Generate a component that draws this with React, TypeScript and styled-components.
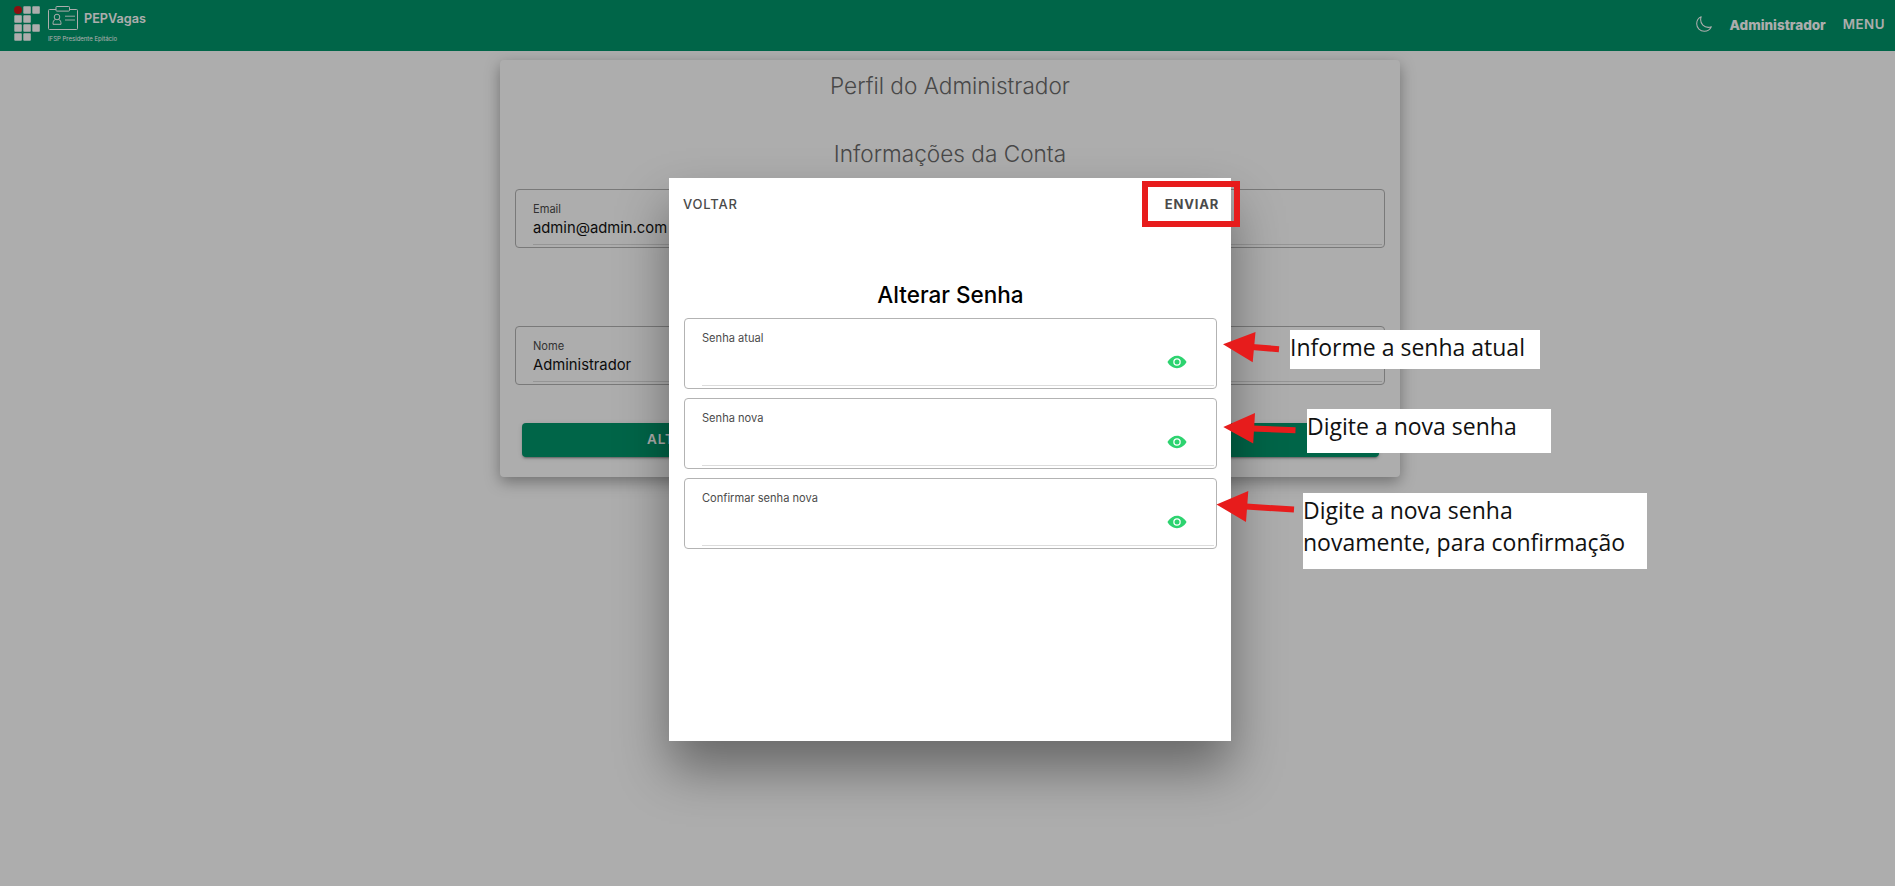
import React from "react";
import styled, { createGlobalStyle } from "styled-components";

const Global = createGlobalStyle`
  *, *::before, *::after { box-sizing: border-box; }
  body { margin: 0; background: #fff; overflow: hidden; font-family: Inter, "Liberation Sans", sans-serif; }
  button { font: inherit; border: 0; background: none; padding: 0; margin: 0; }
  h1, h2 { margin: 0; }
`;

const Page = styled.div`
  position: relative;
  width: 1895px;
  height: 886px;
  overflow: hidden;
`;

const Header = styled.header`
  height: 51px;
  padding: 0 10px 0 14px;
  display: flex;
  justify-content: space-between;
  background: #00966b;
  color: #fff;
`;

const Brand = styled.div`
  display: flex;
  gap: 8px;
  padding-top: 6px;
`;

const BrandText = styled.div`
  display: flex;
  flex-direction: column;
`;

const BrandRow = styled.div`
  display: flex;
  gap: 6px;
  height: 25px;
`;

const BrandName = styled.span`
  font-size: 12.700px;
  line-height: 25px;
  font-weight: 600;
`;

const BrandCampus = styled.span`
  font-size: 6px;
  line-height: 15px;
`;

const HeaderActions = styled.div`
  display: flex;
  align-items: center;
  height: 47px;
`;

const UserName = styled.span`
  margin: 2px 17px 0 17px;
  font-size: 13.500px;
  font-weight: 800;
`;

const MenuButton = styled.button`
  color: #fff;
  font-size: 13.300px;
  font-weight: 600;
  letter-spacing: 0.5px;
`;

const Card = styled.main`
  width: 900px;
  height: 417px;
  margin: 9px 0 0 500px;
  padding: 9px 15px 0;
  border-radius: 4px;
  background: #fff;
  box-shadow: 0 5px 15px rgba(0, 0, 0, 0.35);
`;

const SectionTitle = styled.h1<{ $gap: number }>`
  height: 34px;
  margin-bottom: ${(p) => p.$gap}px;
  text-align: center;
  font-size: 22.600px;
  line-height: 34px;
  font-weight: 300;
  color: #6a6a6a;
`;

const Field = styled.div<{ $height: number; $gap: number }>`
  height: ${(p) => p.$height}px;
  margin-bottom: ${(p) => p.$gap}px;
  padding: 12px 2px 2px 17px;
  border: 1px solid #b3b3b3;
  border-radius: 4px;
  display: flex;
`;

const FieldBody = styled.div`
  flex: 1;
  display: flex;
  flex-direction: column;
  border-bottom: 1px solid #dcdcdc;
`;

const FieldLabel = styled.label`
  font-size: 11.100px;
  line-height: 14px;
  color: #4b4b4b;
`;

const FieldValue = styled.span`
  font-size: 14.800px;
  line-height: 25px;
  color: #111;
`;

const ButtonBar = styled.div`
  height: 34px;
  margin: 0 6px 0 7px;
  display: flex;
  border-radius: 4px;
  background: #00966b;
  box-shadow: 0 3px 1px -2px rgba(0, 0, 0, 0.2), 0 2px 2px rgba(0, 0, 0, 0.14), 0 1px 5px rgba(0, 0, 0, 0.12);
`;

const CardButton = styled.button`
  flex: 1;
  padding: 0 0 2px 125px;
  text-align: left;
  color: #fff;
  font-size: 13.500px;
  font-weight: 600;
  letter-spacing: 0.84px;
`;

const Backdrop = styled.div`
  position: absolute;
  inset: 0;
  padding: 178px 0 0 669px;
  background: rgba(0, 0, 0, 0.32);
`;

const Dialog = styled.section`
  width: 562px;
  height: 563px;
  padding: 0 14px 0 15px;
  background: #fff;
  box-shadow: 0 28px 48px rgba(0, 0, 0, 0.4);
`;

const DialogToolbar = styled.div`
  height: 52px;
  padding-bottom: 1px;
  display: flex;
  justify-content: space-between;
  align-items: center;
`;

const ToolbarButton = styled.button<{ $strong?: boolean }>`
  color: #4a4a4a;
  font-size: 13px;
  font-weight: ${(p) => (p.$strong ? 700 : 500)};
  letter-spacing: 0.8px;
  margin: ${(p) => (p.$strong ? "0 -2px 0 0" : "0 0 0 -1px")};
`;

const DialogTitle = styled.h2`
  height: 34px;
  margin: 48px 0 6px;
  line-height: 34px;
  text-align: center;
  font-size: 22.500px;
  font-weight: 500;
  color: #000;
`;

const EyeButton = styled.button`
  width: 20px;
  height: 20px;
  margin: 7px 27px 0 auto;
  display: flex;
`;

const Annotations = styled.div`
  position: absolute;
  inset: 0;
  pointer-events: none;
`;

const Highlight = styled.div`
  position: absolute;
  left: 1142px;
  top: 180.500px;
  width: 97.500px;
  height: 46.500px;
  border: 6px solid #e71c1c;
`;

const ArrowLayer = styled.svg`
  position: absolute;
  left: 0;
  top: 0;
`;

const Note = styled.div<{ $x: number; $y: number; $w: number; $h: number }>`
  position: absolute;
  left: ${(p) => p.$x}px;
  top: ${(p) => p.$y}px;
  width: ${(p) => p.$w}px;
  height: ${(p) => p.$h}px;
  padding: 1px 0 0;
  background: #fff;
  color: #111;
  font-family: "Open Sans", "Noto Sans", sans-serif;
  font-size: 23px;
  line-height: 32px;
  white-space: nowrap;
`;

const cells = [
  [1, 0], [2, 0], [0, 1], [1, 1], [0, 2], [1, 2], [2, 2], [0, 3], [1, 3],
];

const CampusLogo = () => (
  <svg width="26" height="36" viewBox="0 0 26 36">
    <circle cx="4" cy="4" r="4" fill="#cd1719" />
    {cells.map(([c, r]) => (
      <rect key={`${c}-${r}`} x={c * 9 + 0.3} y={r * 9 + 0.3} width="7.5" height="7.5" rx="0.8" fill="#fff" />
    ))}
  </svg>
);

const BadgeIcon = () => (
  <svg width="30" height="25" viewBox="0 0 30 25" fill="none" stroke="#fff" strokeWidth="1">
    <path d="M8 3.5H1.5a1 1 0 0 0-1 1v18a1 1 0 0 0 1 1h27a1 1 0 0 0 1-1v-18a1 1 0 0 0-1-1H22" />
    <rect x="8" y="0.5" width="13.5" height="4.6" rx="0.8" />
    <circle cx="9" cy="11" r="2.8" />
    <path d="M7.4 13.4c-2 .7-2.4 2.3-2.4 4.9h8c0-2.6-.4-4.2-2.4-4.9" />
    <path d="M17 10.2h10M17 14h10" strokeWidth="0.9" />
  </svg>
);

const MoonIcon = () => (
  <svg width="18" height="18" viewBox="0 0 512 512" fill="none" stroke="#fff" strokeWidth="30" strokeLinejoin="round">
    <path d="M160 136c0-30.620 4.510-61.610 16-88C99.570 81.270 48 159.320 48 248c0 119.290 96.710 216 216 216 88.680 0 166.730-51.570 200-128-26.390 11.490-57.380 16-88 16-119.290 0-216-96.710-216-216z" />
  </svg>
);

const EyeIcon = () => (
  <svg width="20" height="20" viewBox="0 0 512 512" fill="#2dd36f">
    <circle cx="256" cy="256" r="64" />
    <path d="M490.840 238.600c-26.460-40.920-60.790-75.680-99.270-100.530C349 110.550 302 96 255.660 96c-42.520 0-84.330 12.150-124.270 36.110-40.730 24.430-77.630 60.120-109.680 106.070a31.920 31.920 0 0 0-.64 35.540c26.410 41.330 60.400 76.140 98.280 100.650C162 402 207.900 416 255.660 416c46.710 0 93.810-14.430 136.200-41.720 38.460-24.770 72.720-59.660 99.080-100.920a32.200 32.200 0 0 0-.1-34.760zM256 352a96 96 0 1 1 96-96 96.110 96.110 0 0 1-96 96z" />
  </svg>
);

const AccountField = ({ label, value, gap }: { label: string; value: string; gap: number }) => (
  <Field $height={59} $gap={gap}>
    <FieldBody>
      <FieldLabel>{label}</FieldLabel>
      <FieldValue>{value}</FieldValue>
    </FieldBody>
  </Field>
);

const PasswordField = ({ label }: { label: string }) => (
  <Field $height={71} $gap={9}>
    <FieldBody>
      <FieldLabel>{label}</FieldLabel>
      <EyeButton aria-label="Mostrar senha">
        <EyeIcon />
      </EyeButton>
    </FieldBody>
  </Field>
);

export default function App() {
  return (
    <Page>
      <Global />
      <Header>
        <Brand>
          <CampusLogo />
          <BrandText>
            <BrandRow>
              <BadgeIcon />
              <BrandName>PEPVagas</BrandName>
            </BrandRow>
            <BrandCampus>IFSP Presidente Epitácio</BrandCampus>
          </BrandText>
        </Brand>
        <HeaderActions>
          <MoonIcon />
          <UserName>Administrador</UserName>
          <MenuButton>MENU</MenuButton>
        </HeaderActions>
      </Header>

      <Card>
        <SectionTitle $gap={34}>Perfil do Administrador</SectionTitle>
        <SectionTitle $gap={18}>Informações da Conta</SectionTitle>
        <AccountField label="Email" value="admin@admin.com" gap={78} />
        <AccountField label="Nome" value="Administrador" gap={38} />
        <ButtonBar>
          <CardButton>ALTERAR SENHA</CardButton>
          <CardButton aria-label="Salvar" />
        </ButtonBar>
      </Card>

      <Backdrop>
        <Dialog role="dialog" aria-label="Alterar Senha">
          <DialogToolbar>
            <ToolbarButton>VOLTAR</ToolbarButton>
            <ToolbarButton $strong>ENVIAR</ToolbarButton>
          </DialogToolbar>
          <DialogTitle>Alterar Senha</DialogTitle>
          <PasswordField label="Senha atual" />
          <PasswordField label="Senha nova" />
          <PasswordField label="Confirmar senha nova" />
        </Dialog>
      </Backdrop>

      <Annotations>
        <Highlight />
        <ArrowLayer width="1895" height="886" fill="#e71c1c" stroke="#e71c1c">
          <path stroke="none" d="M1223 344.3L1255.5 332L1252.7 362.2zM1223.3 427L1255 413L1253.2 443.5zM1216.5 504.5L1248.3 491L1246 522z" />
          <path strokeWidth="6" d="M1252 347L1279 349.2M1252 428.4L1295.5 430.3M1246 506.6L1294 509.6" />
        </ArrowLayer>
        <Note $x={1290} $y={330} $w={250} $h={39}>Informe a senha atual</Note>
        <Note $x={1307} $y={409} $w={244} $h={44}>Digite a nova senha</Note>
        <Note $x={1303} $y={493} $w={344} $h={76}>
          Digite a nova senha
          <br />
          novamente, para confirmação
        </Note>
      </Annotations>
    </Page>
  );
}
